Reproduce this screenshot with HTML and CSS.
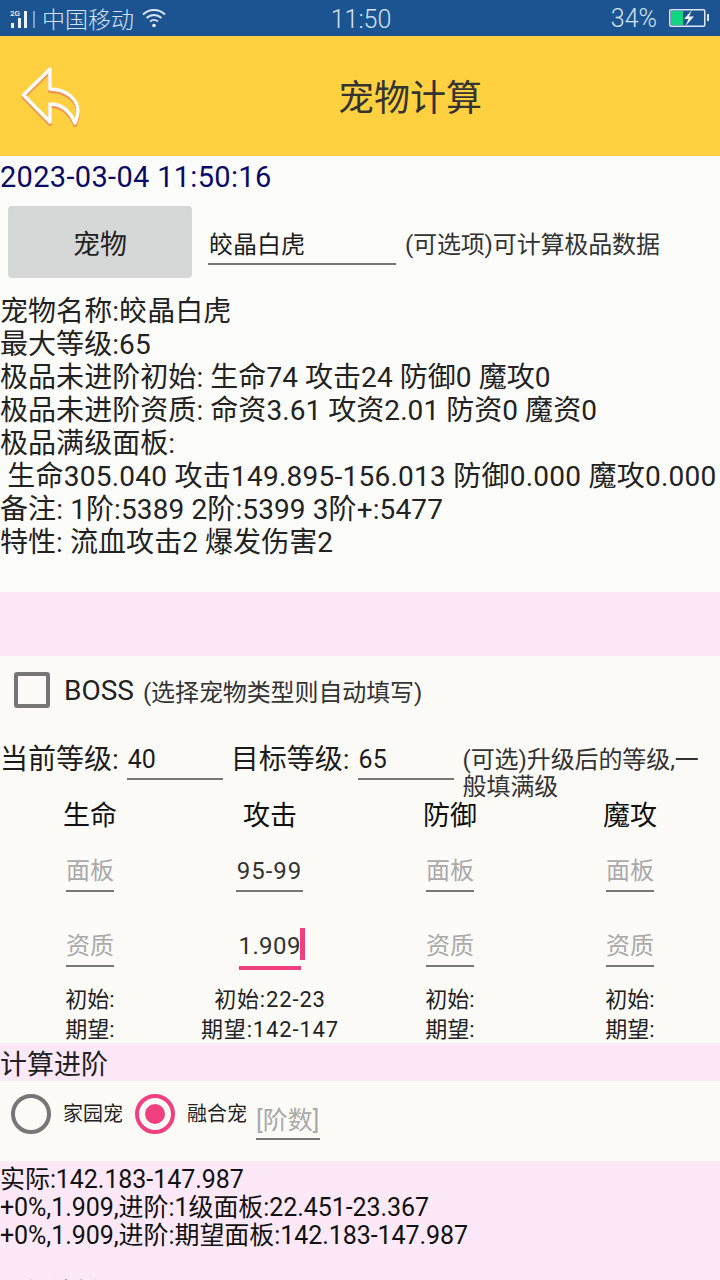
FILE: index.html
```html
<!DOCTYPE html>
<html lang="zh">
<head>
<meta charset="utf-8">
<title>宠物计算</title>
<link rel="stylesheet" href="styles.css">
</head>
<body>
<div class="screen">
  <header class="status">
    <div class="status-left">
      <svg class="signal" width="26" height="22" viewBox="0 0 26 22"><text x="0" y="9" class="g2">2G</text><rect x="1" y="16" width="3" height="5" fill="#eef3f8"/><rect x="8" y="11" width="3" height="10" fill="#eef3f8"/><rect x="14" y="4" width="3" height="17" fill="#eef3f8"/><rect x="23" y="4" width="2" height="17" fill="#7f9fc4"/></svg>
      <span class="carrier">中国移动</span>
      <svg class="wifi" width="24" height="20" viewBox="0 0 24 20" fill="none" stroke="#dfe8f2" stroke-width="1.800"><path d="M1 6.500C7 0.500 17 0.500 23 6.500"/><path d="M4.500 10C9 6 15 6 19.500 10"/><path d="M8 13.500C10.500 11.500 13.500 11.500 16 13.500"/><circle cx="12" cy="17.500" r="1.800" fill="#eef3f8" stroke="none"/></svg>
    </div>
    <div class="clock">11:50</div>
    <div class="status-right">
      <span>34%</span>
      <svg width="40" height="18" viewBox="0 0 40 18"><rect x="0.750" y="0.750" width="35" height="16.500" rx="1.500" fill="none" stroke="#dfe8f2" stroke-width="1.500"/><rect x="2" y="2" width="12" height="14" fill="#12d67f"/><path d="M23 1 L15 10 H19.500 L16.500 17 L25 7.500 H20 Z" fill="#eef3f8"/><rect x="38" y="5" width="2" height="7" fill="#dfe8f2"/></svg>
    </div>
  </header>

  <div class="toolbar">
    <svg class="back" width="62" height="66" viewBox="0 0 62 66" fill="none"><path d="M3.500 32 L30 6 V26 C46 26 58 36 58 48 C58 52 56 57 55 60 C50 48 42 41 30 41 V59 Z" stroke="#e8605c" stroke-opacity="0.550" stroke-width="4" stroke-linejoin="round" transform="translate(0 2)"/><path d="M3.500 32 L30 6 V26 C46 26 58 36 58 48 C58 52 56 57 55 60 C50 48 42 41 30 41 V59 Z" stroke="#fff" stroke-width="3.500" stroke-linejoin="round"/></svg>
    <h1 class="title">宠物计算</h1>
  </div>

  <section class="top">
    <div class="date">2023-03-04 11:50:16</div>
    <div class="pet-row">
      <button class="pet-btn">宠物</button>
      <div class="pet-input">皎晶白虎</div>
      <div class="pet-hint">(可选项)可计算极品数据</div>
    </div>
    <div class="info">
      <div>宠物名称:皎晶白虎</div>
      <div>最大等级:65</div>
      <div>极品未进阶初始: 生命74 攻击24 防御0 魔攻0</div>
      <div>极品未进阶资质: 命资3.61 攻资2.01 防资0 魔资0</div>
      <div>极品满级面板:</div>
      <div class="nowrap">&nbsp;生命305.040 攻击149.895-156.013 防御0.000 魔攻0.000</div>
      <div class="note">备注: 1阶:5389 2阶:5399 3阶+:5477</div>
      <div>特性: 流血攻击2 爆发伤害2</div>
    </div>
  </section>

  <div class="band"></div>

  <section class="calc">
    <div class="boss-row">
      <span class="checkbox"></span>
      <span class="boss">BOSS</span>
      <span class="boss-hint">(选择宠物类型则自动填写)</span>
    </div>
    <div class="level-row">
      <span class="level-label">当前等级:</span>
      <span class="level-input">40</span>
      <span class="level-label second">目标等级:</span>
      <span class="level-input">65</span>
      <span class="level-hint">(可选)升级后的等级,一般填满级</span>
    </div>
    <div class="stats">
      <div class="stat">
        <div class="stat-name">生命</div>
        <div class="field ph">面板</div>
        <div class="field ph second-field">资质</div>
        <div class="stat-line first">初始:</div>
        <div class="stat-line">期望:</div>
      </div>
      <div class="stat">
        <div class="stat-name">攻击</div>
        <div class="field value">95-99</div>
        <div class="field active second-field">1.909<i class="caret"></i></div>
        <div class="stat-line first wide">初始:22-23</div>
        <div class="stat-line wide">期望:142-147</div>
      </div>
      <div class="stat">
        <div class="stat-name">防御</div>
        <div class="field ph">面板</div>
        <div class="field ph second-field">资质</div>
        <div class="stat-line first">初始:</div>
        <div class="stat-line">期望:</div>
      </div>
      <div class="stat">
        <div class="stat-name">魔攻</div>
        <div class="field ph">面板</div>
        <div class="field ph second-field">资质</div>
        <div class="stat-line first">初始:</div>
        <div class="stat-line">期望:</div>
      </div>
    </div>
  </section>

  <div class="adv-head">计算进阶</div>

  <section class="adv">
    <span class="radio"></span>
    <span class="radio-label">家园宠</span>
    <span class="radio on"></span>
    <span class="radio-label">融合宠</span>
    <span class="tier">[阶数]</span>
  </section>

  <section class="result">
    <div>实际:142.183-147.987</div>
    <div>+0%,1.909,进阶:1级面板:22.451-23.367</div>
    <div>+0%,1.909,进阶:期望面板:142.183-147.987</div>
    <div class="cut">升级消耗</div>
  </section>
</div>
</body>
</html>
```
FILE: styles.css
```css
* { box-sizing: border-box; }
html, body { margin: 0; padding: 0; }
body { font-family: Roboto, "Noto Sans CJK SC", sans-serif; color: #1c1c1c; }
.screen { width: 720px; height: 1280px; overflow: hidden; background: #fdfbf8; display: flex; flex-direction: column; }

.status { height: 36px; flex: none; background: #1c5491; color: #d5e2f0; display: grid; grid-template-columns: 1fr auto 1fr; align-items: center; padding: 0 8px 0 10px; font-size: 25px; font-weight: 300; }
.status-left { display: flex; align-items: center; }
.g2 { font-size: 8px; fill: #eef3f8; font-family: Roboto, sans-serif; font-weight: 500; }
.carrier { margin-left: 6px; font-size: 23px; white-space: nowrap; }
.wifi { margin-left: 8px; }
.clock { text-align: center; margin-top: 2px; }
.status-right { display: flex; justify-content: flex-end; align-items: center; gap: 12px; margin-right: 3px; }

.toolbar { height: 120px; flex: none; background: #ffd040; display: flex; align-items: center; }
.back { margin-left: 20px; flex: none; }
.title { margin: 0 0 2px 256px; font-size: 36px; font-weight: 400; color: #333; white-space: nowrap; }

.top { height: 436px; flex: none; background: #fcfcfa; }
.date { font-size: 29px; letter-spacing: 0.320px; line-height: 43px; margin-bottom: 7px; color: #0b0b66; }
.pet-row { display: flex; align-items: center; height: 72px; padding-left: 8px; }
.pet-btn { width: 184px; height: 72px; border: 0; border-radius: 4px; background: #d6d7d7; font: inherit; font-size: 27px; color: #222; flex: none; }
.pet-input { width: 188px; margin-left: 16px; margin-top: 1px; height: 44px; line-height: 48px; border-bottom: 2px solid #777; font-size: 24px; padding-left: 1px; flex: none; }
.pet-hint { margin-left: 9px; font-size: 24px; letter-spacing: -0.150px; color: #333; white-space: nowrap; }
.info { margin-top: 17px; font-size: 28px; line-height: 33px; letter-spacing: 0.060px; color: #222; }
.nowrap { white-space: nowrap; letter-spacing: 0.250px; }
.note { letter-spacing: 0.110px; }

.band { height: 64px; flex: none; background: #fce8f7; }

.calc { height: 387px; flex: none; }
.boss-row { height: 70px; display: flex; align-items: center; padding: 0 0 2px 14px; }
.checkbox { width: 36px; height: 36px; border: 4px solid #777; border-radius: 3px; flex: none; }
.boss { margin-left: 14px; font-size: 28px; color: #222; }
.boss-hint { margin-left: 9px; font-size: 24px; letter-spacing: -0.100px; color: #333; white-space: nowrap; }
.level-row { display: flex; align-items: flex-start; height: 54px; margin-top: 2px; font-size: 28px; }
.level-label { line-height: 64px; white-space: nowrap; }
.level-label.second { margin-left: 8px; }
.level-input { width: 96px; margin-left: 8px; height: 52px; border-bottom: 2px solid #777; font-size: 25px; line-height: 64px; padding-left: 1px; flex: none; }
.level-hint { margin-left: 9px; width: 250px; font-size: 24px; letter-spacing: -0.100px; line-height: 27px; margin-top: 19px; color: #333; }
.stats { display: grid; grid-template-columns: repeat(4, 180px); margin-top: 17px; }
.stat { display: flex; flex-direction: column; align-items: center; color: #222; }
.stat-name { font-size: 27px; line-height: 34px; color: #111; }
.field { margin-top: 22px; height: 37px; font-size: 24px; line-height: 32px; border-bottom: 2px solid #777; position: relative; color: #333; white-space: nowrap; text-align: center; }
.second-field { margin-top: 38px; }
.field.ph { color: #aaa; width: 48px; }
.field.value { width: 67px; letter-spacing: 1px; margin-right: 1px; line-height: 33px; }
.field.active { border-bottom: 4px solid #f0407f; height: 40px; width: 62px; margin-bottom: -3px; margin-right: 1px; letter-spacing: 0.400px; }
.caret { position: absolute; left: 61px; top: -2px; width: 5px; height: 32px; background: #f0407f; }
.stat-line { font-size: 22px; line-height: 30px; white-space: nowrap; }
.stat-line.first { margin-top: 18px; }
.stat-line.wide { letter-spacing: 0.850px; }

.adv-head { height: 38px; flex: none; background: #fce8f7; font-size: 27px; line-height: 44px; color: #222; }
.adv { height: 80px; flex: none; display: flex; align-items: flex-start; padding: 13px 0 0 11px; }
.radio { width: 40px; height: 40px; border: 4px solid #777; border-radius: 50%; flex: none; position: relative; }
.radio.on { border-color: #f0407f; margin-left: 12px; }
.radio.on::after { content: ""; position: absolute; left: 6px; top: 6px; width: 20px; height: 20px; border-radius: 50%; background: #f0407f; }
.radio-label { margin-left: 12px; font-size: 20px; line-height: 40px; color: #222; white-space: nowrap; }
.tier { margin-left: 9px; width: 64px; height: 40px; margin-top: 6px; font-size: 25px; line-height: 41px; color: #aaa; border-bottom: 2px solid #777; white-space: nowrap; }

.result { flex: 1; background: #fce8f7; font-size: 25px; line-height: 28px; letter-spacing: -0.060px; padding-top: 5px; color: #111; overflow: hidden; }
.cut { margin-top: 29px; color: #333; }
```
